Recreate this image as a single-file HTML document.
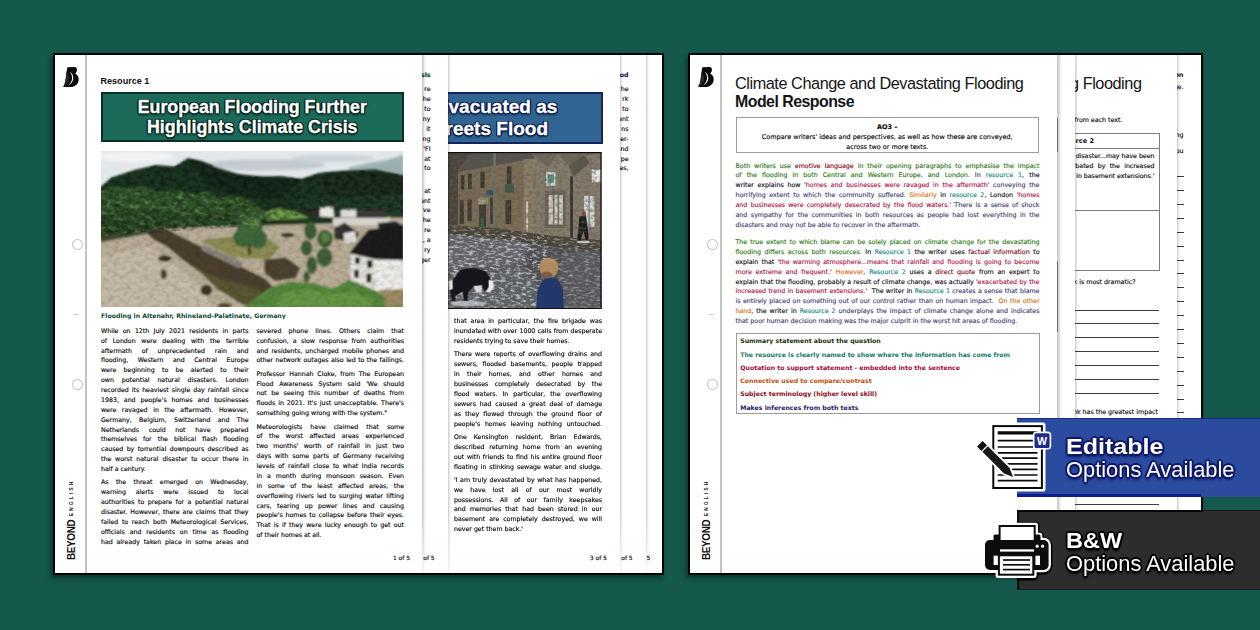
<!DOCTYPE html>
<html lang="en">
<head>
<meta charset="utf-8">
<title>Climate Change and Devastating Flooding</title>
<style>
html,body{margin:0;padding:0}
body{width:1260px;height:630px;overflow:hidden;background:#15594c;position:relative;font-family:"Liberation Sans",sans-serif;color:#111}
.abs{position:absolute}
.z2{z-index:2}
.grp{z-index:1;position:absolute;top:53px;height:518px;border:2px solid #040404;background:#fff;box-shadow:-2px 3px 5px rgba(0,0,0,.42)}
.pg{position:absolute;top:0;height:518px;background:#fff;overflow:hidden}
.edge{position:absolute;top:0;bottom:0;width:4.6px;z-index:5;background:linear-gradient(to right,rgba(0,0,0,.2),rgba(0,0,0,.17) 35%,rgba(0,0,0,.05) 70%,rgba(0,0,0,0));-webkit-mask-image:linear-gradient(to bottom,#000 0,#000 88%,rgba(0,0,0,.25) 100%);mask-image:linear-gradient(to bottom,#000 0,#000 88%,rgba(0,0,0,.25) 100%)}
.edge.s{width:3px;background:linear-gradient(to right,rgba(0,0,0,.2),rgba(0,0,0,.1) 45%,rgba(0,0,0,0))}
.mline{position:absolute;top:0;bottom:0;left:30.4px;width:1.3px;background:#c2c2c2}
.hole{position:absolute;left:17px;width:9px;height:9px;border:1px solid #bdbdbd;border-radius:50%;background:#fff}
.tick{position:absolute;left:18px;width:6px;height:1px;background:#d2d2d2}
.logo{position:absolute;left:5px;top:10px;width:22px;height:24px}
.logo b{position:absolute;left:2px;top:-1px;font-weight:bold;font-style:italic;font-size:25px;line-height:25px;color:#111}
.beyond{position:absolute;left:11px;top:505.2px;transform-origin:0 0;transform:rotate(-90deg);white-space:nowrap;font-weight:bold;font-size:10px;line-height:12px;letter-spacing:-.4px;color:#111}
.beyond small{font-size:4.6px;letter-spacing:2.3px;margin-left:3.6px;position:relative;top:-2.2px}
.t{position:absolute;white-space:nowrap}
.body{position:absolute;font-family:"DejaVu Sans","Liberation Sans",sans-serif;font-size:6.25px;line-height:9.87px;color:#0c0c0c;-webkit-text-stroke:.16px currentColor}
.body p{margin:0 0 3.45px 0}
.body .l{display:block;text-align:justify;text-align-last:justify;white-space:nowrap}
.body .e{display:block;white-space:pre;text-align:left}
.body .l span,.body .e span{white-space:pre-wrap}
.pn{position:absolute;font-family:"DejaVu Sans","Liberation Sans",sans-serif;font-size:5.9px;line-height:8px;color:#0c0c0c;-webkit-text-stroke:.15px currentColor;white-space:nowrap;margin-top:.7px}
.ttl{position:absolute;box-sizing:border-box;border:2px solid #0b2f26;color:#fff;font-weight:bold;font-size:17.8px;line-height:20.4px;text-align:center;white-space:nowrap;-webkit-text-stroke:.3px #fff;text-shadow:1.4px 0 .6px #02231b,-1.4px 0 .6px #02231b,0 1.4px .6px #02231b,0 -1.4px .6px #02231b,1px 1px .6px #02231b,-1px 1px .6px #02231b,1px -1px .6px #02231b,-1px -1px .6px #02231b,0 2px 2px #02231b}
.frag{position:absolute;font-family:"DejaVu Sans","Liberation Sans",sans-serif;font-size:6.25px;line-height:9.87px;text-align:right;white-space:nowrap;color:#0c0c0c;-webkit-text-stroke:.16px currentColor}
.frag b{display:block}
.frag span{display:block}
.cg{color:#2f7d16}.cr{color:#8c0a1c}.ct{color:#1b8a86}.cc{color:#b0204f}.cn{color:#2b2a6a}.co{color:#d9731a}.ck{color:#14141c}.cv{color:#4a4676}
.key{position:absolute;font-family:"DejaVu Sans","Liberation Sans",sans-serif;font-weight:bold;font-size:6.22px;line-height:13.27px;white-space:nowrap}
.hr{position:absolute;height:1px;background:#3c3c3c}
.bt{z-index:3;position:absolute;white-space:nowrap;color:#fff;transform-origin:0 50%}
.dj{font-family:"DejaVu Sans","Liberation Sans",sans-serif}

</style>
</head>
<body>

<!-- ================= LEFT GROUP ================= -->
<div class="grp" id="gL" style="left:53px;width:607px">
  <!-- page 5 (sliver) -->
  <div class="pg" id="p5" style="left:0;width:607px">
    <div class="edge s" style="left:590.5px"></div>
    <div class="pn" style="left:591.5px;top:498px">5</div>
  </div>

  <!-- page 4 (sliver) -->
  <div class="pg" id="p4" style="left:0;width:590.5px">
    <div class="edge s" style="left:564.5px"></div>
    <div class="frag" style="right:17px;top:14.6px;width:40px">
      <b style="color:#14245e;margin-bottom:5px">od</b>
      <span>he</span><span>rk</span><span>to</span><span>ent</span><span>ns</span><span>er-</span><span>nd</span><span>pe</span><span>es,</span>
    </div>
    <div class="pn" style="left:566.3px;top:498px">of 5</div>
  </div>

  <!-- page 3 -->
  <div class="pg" id="p3" style="left:0;width:564.5px">
    <div class="abs" style="left:392px;top:0;width:172.5px;height:517px;overflow:hidden">
      <div class="ttl" style="left:-148px;top:37px;width:303.5px;height:51.5px;background:#2f6590;border-color:#15245e;font-size:19px;line-height:22px;text-shadow:1.4px 0 .6px #0c1a4a,-1.4px 0 .6px #0c1a4a,0 1.4px .6px #0c1a4a,0 -1.4px .6px #0c1a4a,1px 1px .6px #0c1a4a,-1px 1px .6px #0c1a4a,1px -1px .6px #0c1a4a,-1px -1px .6px #0c1a4a,0 2px 2px #0c1a4a"><span class="abs" style="right:43.2px;top:1.8px">Residents Evacuated as</span><span class="abs" style="right:52.5px;top:24px">Kensington Streets Flood</span></div>
    <svg class="abs" style="left:0;top:97.2px" width="154.6" height="157.3" viewBox="18 18 587 594" preserveAspectRatio="none">
      <defs>
        <filter id="b3" x="-5%" y="-5%" width="110%" height="110%"><feGaussianBlur stdDeviation="3"/></filter>
        <filter id="nz2" x="0" y="0" width="100%" height="100%"><feTurbulence type="fractalNoise" baseFrequency=".05 .11" numOctaves="3" seed="3"/><feColorMatrix values="0 0 0 0 .8  0 0 0 0 .82  0 0 0 0 .85  2.4 0 0 0 -1.12"/></filter>
        <filter id="nz3" x="0" y="0" width="100%" height="100%"><feTurbulence type="fractalNoise" baseFrequency=".07 .09" numOctaves="3" seed="11"/><feColorMatrix values="0 0 0 0 .12  0 0 0 0 .1  0 0 0 0 .08  2.6 0 0 0 -1.0"/></filter>
        <clipPath id="cb"><path d="M18 18 L605 18 L605 352 L420 335 L200 305 L18 296Z"/></clipPath>
        <clipPath id="c2"><rect x="18" y="18" width="587" height="594"/></clipPath>
        <clipPath id="cw"><path d="M18 296 L200 305 L420 335 L605 352 L605 612 L18 612Z"/></clipPath>
      </defs>
      <g clip-path="url(#c2)">
      <rect x="18" y="18" width="587" height="594" fill="#74695a"/>
      <g filter="url(#b3)">
        <!-- left dark wall -->
        <path d="M18 18 L110 18 L60 92 L60 296 L18 292Z" fill="#4a453e"/>
        <!-- roof -->
        <path d="M110 18 L330 18 L352 42 L60 94Z" fill="#55534f"/>
        <!-- mid facade -->
        <path d="M60 94 L310 50 L310 318 L60 296Z" fill="#7d6e57"/>
        <path d="M60 160 L310 150 L310 200 L60 205Z" fill="#75684f" opacity=".6"/>
        <!-- column -->
        <rect x="308" y="45" width="44" height="280" fill="#8c7f6a"/>
        <!-- right building -->
        <path d="M352 30 L400 70 L440 24 L480 70 L540 30 L605 22 L605 352 L352 328Z" fill="#857b6c"/>
        <path d="M352 18 L605 18 L605 24 L540 32 L480 72 L440 26 L400 72 L352 32Z" fill="#6e675c"/>
        <path d="M480 70 L540 30 L560 60 L500 110Z" fill="#5a554c"/>
        <!-- sky/sign top right -->
        <rect x="568" y="84" width="40" height="48" fill="#e6e8ea"/>
        <rect x="394" y="94" width="36" height="52" fill="#c9d8d2"/>
        <rect x="400" y="104" width="24" height="30" fill="#5a8f86"/>
        <!-- windows mid facade -->
        <g fill="#3a382f">
          <rect x="70" y="105" width="14" height="55"/><rect x="98" y="100" width="14" height="58"/><rect x="145" y="92" width="16" height="62"/>
          <rect x="245" y="72" width="18" height="68"/>
          <rect x="66" y="200" width="16" height="90"/><rect x="96" y="198" width="16" height="80"/>
          <rect x="140" y="215" width="26" height="85"/><rect x="240" y="200" width="22" height="90"/>
          <rect x="182" y="190" width="10" height="100"/>
        </g>
        <rect x="136" y="190" width="36" height="26" fill="#a29a80"/>
        <rect x="238" y="140" width="34" height="32" fill="#3d5a48"/>
        <rect x="168" y="162" width="28" height="20" fill="#3a4f66"/>
        <rect x="145" y="268" width="14" height="40" fill="#2f5a4a"/>
        <!-- pole -->
        <rect x="194" y="18" width="10" height="292" fill="#6f7466"/>
        <!-- right building windows -->
        <rect x="390" y="165" width="78" height="140" fill="#6c6558"/>
        <rect x="404" y="180" width="54" height="112" fill="#cfcfc6"/>
        <rect x="420" y="180" width="6" height="112" fill="#77705f"/><rect x="438" y="180" width="6" height="112" fill="#77705f"/>
        <rect x="538" y="184" width="40" height="118" fill="#d2d6d4"/>
        <rect x="555" y="184" width="5" height="118" fill="#7c8a88"/>
        <rect x="486" y="110" width="10" height="235" fill="#2e2c2a"/>
        <rect x="318" y="205" width="8" height="120" fill="#c8c4b8"/>
        <!-- water -->
        <path d="M18 296 L200 305 L420 335 L605 352 L605 612 L18 612Z" fill="#4f5052"/>
        <path d="M18 296 L200 305 L420 335 L605 352 L605 392 L400 372 L200 345 L18 330Z" fill="#4a4437"/>
        <path d="M18 330 L200 345 L330 362 L300 440 L18 470Z" fill="#626467"/>
        <path d="M18 470 L300 440 L360 520 L360 612 L18 612Z" fill="#5c5e62"/>
        <path d="M450 400 L605 392 L605 612 L460 612Z" fill="#58595b"/>
        <!-- man -->
        <path d="M520 262 L545 256 L552 300 L556 350 L544 352 L536 316 L524 354 L512 350 L518 300Z" fill="#1c1c1c"/>
        <circle cx="538" cy="250" r="8" fill="#9a3a2a"/>
        <ellipse cx="535" cy="358" rx="26" ry="5" fill="#b8bcc0"/>
      </g>
      <g clip-path="url(#cb)"><rect x="18" y="18" width="587" height="340" filter="url(#nz3)" opacity=".55"/></g>
      <g clip-path="url(#cw)"><rect x="18" y="296" width="587" height="316" filter="url(#nz2)" opacity=".5"/><rect x="18" y="330" width="380" height="282" filter="url(#nz2)" opacity=".55"/></g>
      <g filter="url(#b3)">
        <!-- dog -->
        <path d="M40 500 L70 462 L120 455 L165 468 L185 500 L180 530 L160 545 L150 520 L120 525 L100 545 L95 580 L82 580 L78 545 L50 560 L48 582 L36 580 L30 540Z" fill="#15151a"/>
        <path d="M176 500 L192 505 L196 530 L180 548 L166 546 L176 528Z" fill="#ecebea"/>
        <path d="M24 505 L38 500 L40 535 L26 540Z" fill="#e4e3e2"/>
        <path d="M118 524 L150 522 L150 545 L130 550Z" fill="#d8d7d5"/>
        <ellipse cx="100" cy="590" rx="70" ry="10" fill="#c9ccd0" opacity=".7"/>
        <!-- boy -->
        <path d="M356 612 L362 540 L380 502 L410 492 L440 500 L458 540 L462 612Z" fill="#24376a"/>
        <ellipse cx="405" cy="455" rx="36" ry="38" fill="#b08a5e"/>
        <path d="M372 440 C380 412 430 410 441 445 C425 432 395 430 372 440Z" fill="#b8905f"/>
        <ellipse cx="396" cy="482" rx="22" ry="12" fill="#7d5f45"/>
      </g>
      <rect x="18" y="18" width="587" height="594" fill="none" stroke="#0b0b0b" stroke-width="9"/>
      </g>
    </svg>

<div class="body" style="left:7px;top:261.4px;width:148px;"><p><span class="l">that area in particular, the fire brigade was</span><span class="l">inundated with over 1000 calls from desperate</span><span class="e">residents trying to save their homes.</span></p><p><span class="l">There were reports of overflowing drains and</span><span class="l">sewers, flooded basements, people trapped</span><span class="l">in their homes, and other homes and</span><span class="l">businesses completely desecrated by the</span><span class="l">flood waters. In particular, the overflowing</span><span class="l">sewers had caused a great deal of damage</span><span class="l">as they flowed through the ground floor of</span><span class="l">people's homes leaving nothing untouched.</span></p><p><span class="l">One Kensington resident, Brian Edwards,</span><span class="l">described returning home from an evening</span><span class="l">out with friends to find his entire ground floor</span><span class="l">floating in stinking sewage water and sludge.</span></p><p><span class="l">'I am truly devastated by what has happened,</span><span class="l">we have lost all of our most worldly</span><span class="l">possessions. All of our family keepsakes</span><span class="l">and memories that had been stored in our</span><span class="l">basement are completely destroyed, we will</span><span class="e">never get them back.'</span></p></div>
      <div class="pn" style="left:143px;top:498px">3 of 5</div>
    </div>
    <div class="edge s" style="left:392.5px"></div>
  </div>

  <!-- page 2 (sliver) -->
  <div class="pg" id="p2" style="left:0;width:392.5px">
    <div class="edge" style="left:366.5px"></div>
    <div class="frag" style="right:17px;top:14.6px;width:40px">
      <b style="color:#0b4a33;margin-bottom:5px">sis</b>
      <span>re</span><span>he</span><span>to</span><span>ny</span><span>it</span><span>ng</span><span>'FI</span><span>at</span><span>to</span>
      <span style="margin-top:12.4px">at</span><span>ent</span><span>ve</span><span>he</span><span>re</span><span>, a</span><span>ry</span><span>ger</span>
    </div>
    <div class="pn" style="left:368.3px;top:498px">of 5</div>
  </div>

  <!-- page 1 -->
  <div class="pg" id="p1" style="left:0;width:366.5px">
  <div class="mline"></div>
  <svg class="abs" style="left:0;top:3px" width="40" height="40" viewBox="0 0 630 630"><path d="M195 145 L318 142 C345 150 352 185 341 212 C335 226 326 238 318 246 C357 266 381 310 372 356 C362 410 320 450 270 456 L128 458 L152 400 C166 350 172 280 181 215 Z" fill="#0a0a0a"/><path d="M232 222 C264 232 294 280 287 330 C280 380 246 416 204 433 C250 396 271 350 269 310 C267 270 252 240 232 222 Z" fill="#fff"/><path d="M182 230 C215 260 232 310 215 365 C200 400 175 430 150 445 L160 400 C172 350 176 290 182 230Z" fill="#2a2a2a"/></svg>
  <div class="hole" style="top:183.5px"></div>
  <div class="tick" style="top:258.5px"></div>
  <div class="hole" style="top:323.5px"></div>
  <div class="beyond">BEYOND<small>ENGLISH</small></div>

    <div class="t" style="left:45.4px;top:21px;font-weight:bold;font-size:9.1px;line-height:10px;color:#111">Resource 1</div>
    <div class="ttl" style="left:46px;top:36.8px;width:302.5px;height:50px;background:#1b6a5a;padding-top:2.9px">European Flooding Further<br>Highlights Climate Crisis</div>
    <svg class="abs" style="left:46.3px;top:95.5px" width="302.2" height="156.8" viewBox="20 17 1147 595" preserveAspectRatio="none">
      <defs>
        <filter id="b1" x="-5%" y="-5%" width="110%" height="110%"><feGaussianBlur stdDeviation="3.2"/></filter>
        <filter id="b2" x="-5%" y="-5%" width="110%" height="110%"><feGaussianBlur stdDeviation="7"/></filter>
        <filter id="nz" x="0" y="0" width="100%" height="100%"><feTurbulence type="fractalNoise" baseFrequency=".045 .06" numOctaves="3" seed="7"/><feColorMatrix values="0 0 0 0 0  0 0 0 0 0  0 0 0 0 0  1.5 0 0 0 -0.55"/></filter>
        <filter id="nzl" x="0" y="0" width="100%" height="100%"><feTurbulence type="fractalNoise" baseFrequency=".035 .05" numOctaves="2" seed="21"/><feColorMatrix values="0 0 0 0 .33  0 0 0 0 .48  0 0 0 0 .24  2.2 0 0 0 -1.1"/></filter>
        <clipPath id="cf"><path d="M10 165 L80 150 L130 160 L180 150 L240 175 L300 165 L360 180 L420 172 L470 195 L540 185 L600 215 L640 240 L620 300 L10 340Z"/></clipPath>
        <clipPath id="cl1"><path d="M10 160 L60 118 L150 88 L230 70 L300 76 L350 44 L400 54 L440 70 L480 100 L560 106 L640 116 L700 112 L780 122 L850 100 L930 92 L1000 90 L1060 86 L1110 98 L1180 112 L1180 250 L840 240 L640 300 L10 340Z"/></clipPath>
        <clipPath id="c1"><rect x="20" y="17" width="1147" height="595"/></clipPath>
      </defs>
      <g clip-path="url(#c1)">
      <rect x="20" y="17" width="1147" height="595" fill="#e3e7ea"/>
      <g filter="url(#b2)">
        <ellipse cx="640" cy="70" rx="230" ry="22" fill="#c3cbd1"/>
        <ellipse cx="900" cy="45" rx="160" ry="14" fill="#cdd4d9"/>
        <ellipse cx="150" cy="40" rx="150" ry="20" fill="#f0f2f3"/>
        <path d="M960 80 L1040 62 L1110 50 L1170 30 L1170 120 L960 110Z" fill="#9db0b1"/>
      </g>
      <g filter="url(#b1)">
        <!-- mountains -->
        <path d="M10 160 L60 118 L150 88 L230 70 L300 76 L350 44 L400 54 L440 70 L480 100 L560 106 L640 116 L700 112 L780 122 L850 100 L930 92 L1000 90 L1060 86 L1110 98 L1180 112 L1180 340 L10 340Z" fill="#1d3522"/>
        <path d="M350 48 L440 74 L560 110 L700 116 L780 126 L700 200 L520 180 L420 140Z" fill="#16291b"/>
        <path d="M850 104 L1000 92 L1110 100 L1180 116 L1180 230 L900 220Z" fill="#1a2f1f"/>
        <!-- forest -->
        <path d="M10 165 L80 150 L130 160 L180 150 L240 175 L300 165 L360 180 L420 172 L470 195 L540 185 L600 215 L640 240 L620 300 L10 340Z" fill="#33572b"/>
        <path d="M10 260 L200 240 L420 262 L600 255 L630 290 L300 312 L10 340Z" fill="#2a4a25"/>
        <!-- field -->
        <path d="M640 248 L690 234 L760 246 L810 272 L650 282Z" fill="#6d9a48"/>
        <path d="M600 282 L820 272 L830 292 L560 302Z" fill="#22361f"/>
        <!-- right hill low -->
        <path d="M760 200 L1180 180 L1180 300 L820 270Z" fill="#213a25"/>
        <!-- river -->
        <path d="M10 345 L200 318 L420 305 L640 300 L900 292 L1130 270 L1180 270 L1180 620 L10 620Z" fill="#b9ad97"/>
        <path d="M10 330 L190 315 L200 330 L20 362Z" fill="#3a4a2c"/>
        <path d="M900 270 L1120 268 L1100 300 L900 300Z" fill="#d5d2ca"/>
        <!-- village -->
        <path d="M850 232 L900 228 L905 268 L850 266Z" fill="#e8e6e0"/>
        <path d="M930 240 L990 238 L990 268 L930 268Z" fill="#dcdad4"/>
        <path d="M780 236 L850 236 L850 262 L780 260Z" fill="#2c2a28"/>
        <path d="M990 238 L1100 236 L1105 270 L990 270Z" fill="#3a3838"/>
        <!-- island -->
        <path d="M395 356 L520 340 L660 352 L700 380 L660 430 L520 420Z" fill="#8d8c52"/>
        <!-- debris dam -->
        <path d="M185 322 L255 305 L330 345 L430 395 L540 450 L640 500 L680 540 L670 600 L600 612 L540 590 L470 540 L400 480 L330 430 L270 380 L215 350Z" fill="#4b3f2e"/>
        <path d="M640 430 L720 420 L775 460 L760 500 L680 510 L640 480Z" fill="#4d4231"/>
        <path d="M20 420 L200 380 L330 470 L420 560 L440 620 L20 620Z" fill="#c4baa7"/>
        <path d="M410 372 L560 440 L545 462 L400 392Z" fill="#8d877a"/>
        <path d="M380 460 L470 500 L620 540 L640 600 L560 600 L460 540Z" fill="#5a5432"/>
        <!-- tree 1 -->
        <g fill="#40663a"><ellipse cx="585" cy="300" rx="50" ry="42"/><ellipse cx="560" cy="345" rx="38" ry="36"/><ellipse cx="615" cy="350" rx="36" ry="38"/><ellipse cx="610" cy="268" rx="30" ry="20"/><rect x="578" y="370" width="10" height="40" fill="#3a3324"/></g><ellipse cx="600" cy="290" rx="26" ry="20" fill="#55803f"/>
        <!-- tree 2 -->
        <g fill="#3f5f34"><ellipse cx="815" cy="320" rx="24" ry="34"/><ellipse cx="870" cy="350" rx="30" ry="34"/><ellipse cx="800" cy="385" rx="22" ry="30"/><ellipse cx="868" cy="420" rx="30" ry="36"/><ellipse cx="820" cy="450" rx="20" ry="34"/><ellipse cx="800" cy="495" rx="12" ry="22"/></g><ellipse cx="872" cy="345" rx="16" ry="20" fill="#5a8444"/>
        <!-- back houses -->
        <path d="M905 310 L945 288 L1000 330 L985 365 L905 350Z" fill="#34322f"/>
        <path d="M940 330 L985 322 L990 362 L945 366Z" fill="#e9e7e2"/>
        <path d="M1070 290 L1140 284 L1165 300 L1165 320 L1075 316Z" fill="#24242a"/>
        <!-- house -->
        <path d="M968 408 L1170 425 L1170 542 L1060 548 L968 512Z" fill="#eeece8"/>
        <path d="M968 408 L1062 424 L1060 548 L968 512Z" fill="#e4e2dc"/>
        <path d="M962 404 L1035 316 L1120 305 L1170 296 L1170 432 L1060 428Z" fill="#1b1b1f"/>
        <rect x="984" y="420" width="18" height="26" fill="#222"/><rect x="1030" y="432" width="20" height="28" fill="#222"/>
        <rect x="982" y="468" width="16" height="30" fill="#222"/><rect x="1028" y="482" width="18" height="34" fill="#222"/>
        <!-- water bottom right -->
        <path d="M1075 545 L1170 540 L1170 620 L1085 620Z" fill="#9d8a63"/>
        <!-- bushes -->
        <path d="M555 620 L600 580 L660 535 L740 512 L830 520 L900 540 L960 505 L1010 525 L1060 545 L1095 570 L1100 620Z" fill="#55873a"/>
        <path d="M700 560 L800 540 L900 560 L980 550 L1050 580 L1060 620 L680 620Z" fill="#669645"/>
        <!-- small debris -->
        <ellipse cx="262" cy="425" rx="26" ry="12" fill="#3c3426"/>
        <ellipse cx="258" cy="485" rx="12" ry="18" fill="#4a4030"/>
        <ellipse cx="728" cy="336" rx="26" ry="9" fill="#3a3428"/>
        <ellipse cx="420" cy="545" rx="22" ry="20" fill="#3e3628"/>
        <ellipse cx="490" cy="604" rx="28" ry="9" fill="#4a4030"/>
      </g>
      <g clip-path="url(#cf)"><rect x="20" y="140" width="640" height="200" filter="url(#nzl)" opacity=".6"/></g>
      <g clip-path="url(#cl1)"><rect x="20" y="17" width="1147" height="595" filter="url(#nz)" opacity=".6"/></g>
      <rect x="20" y="300" width="1147" height="312" filter="url(#nz)" opacity=".18"/>
      </g>
    </svg>

    <div class="t dj" style="left:46px;top:256.4px;font-weight:bold;font-size:6.22px;line-height:9px;color:#0b4a33">Flooding in Altenahr, Rhineland-Palatinate, Germany</div>
<div class="body" style="left:46px;top:270.8px;width:147.5px;"><p><span class="l">While on 12th July 2021 residents in parts</span><span class="l">of London were dealing with the terrible</span><span class="l">aftermath of unprecedented rain and</span><span class="l">flooding, Western and Central Europe</span><span class="l">were beginning to be alerted to their</span><span class="l">own potential natural disasters. London</span><span class="l">recorded its heaviest single day rainfall since</span><span class="l">1983, and people's homes and businesses</span><span class="l">were ravaged in the aftermath. However,</span><span class="l">Germany, Belgium, Switzerland and The</span><span class="l">Netherlands could not have prepared</span><span class="l">themselves for the biblical flash flooding</span><span class="l">caused by torrential downpours described as</span><span class="l">the worst natural disaster to occur there in</span><span class="e">half a century.</span></p><p><span class="l">As the threat emerged on Wednesday,</span><span class="l">warning alerts were issued to local</span><span class="l">authorities to prepare for a potential natural</span><span class="l">disaster. However, there are claims that they</span><span class="l">failed to reach both Meteorological Services,</span><span class="l">officials and residents on time as flooding</span><span class="l">had already taken place in some areas and</span></p></div>
<div class="body" style="left:201.5px;top:270.8px;width:147.5px;"><p><span class="l">severed phone lines. Others claim that</span><span class="l">confusion, a slow response from authorities</span><span class="l">and residents, uncharged mobile phones and</span><span class="l">other network outages also led to the failings.</span></p><p><span class="l">Professor Hannah Cloke, from The European</span><span class="l">Flood Awareness System said 'We should</span><span class="l">not be seeing this number of deaths from</span><span class="l">floods in 2021. It's just unacceptable. There's</span><span class="e">something going wrong with the system."</span></p><p><span class="l">Meteorologists have claimed that some</span><span class="l">of the worst affected areas experienced</span><span class="l">two months' worth of rainfall in just two</span><span class="l">days with some parts of Germany receiving</span><span class="l">levels of rainfall close to what India records</span><span class="l">in a month during monsoon season. Even</span><span class="l">in some of the least affected areas, the</span><span class="l">overflowing rivers led to surging water lifting</span><span class="l">cars, tearing up power lines and causing</span><span class="l">people's homes to collapse before their eyes.</span><span class="l">That is if they were lucky enough to get out</span><span class="e">of their homes at all.</span></p></div>
    <div class="pn" style="left:338px;top:498px">1 of 5</div>
  </div>

</div>

<!-- ================= RIGHT GROUP ================= -->
<div class="grp" id="gR" style="left:688px;width:511px">
  <!-- right page 4 (sliver) -->
  <div class="pg" id="r4" style="left:0;width:511px">
    <div class="edge s" style="left:486.5px"></div>
    <div class="abs" style="left:486.5px;top:0;width:24.5px;height:517px;overflow:hidden">
      <div class="t" style="right:17.5px;top:14.6px;font-family:'DejaVu Sans','Liberation Sans',sans-serif;font-size:6.5px;line-height:10px;font-weight:bold;color:#151515">Comprehension</div>
      <div class="t" style="right:17.5px;top:27px;font-family:'DejaVu Sans','Liberation Sans',sans-serif;font-size:6.3px;line-height:10px;color:#0c0c0c;-webkit-text-stroke:.15px currentColor">the passage.</div>
      <div class="t" style="right:17.5px;top:74.6px;font-family:'DejaVu Sans','Liberation Sans',sans-serif;font-size:6.3px;line-height:10px;color:#0c0c0c;-webkit-text-stroke:.15px currentColor">following</div>
      <div class="t" style="right:17.5px;top:91px;font-family:'DejaVu Sans','Liberation Sans',sans-serif;font-size:6.3px;line-height:10px;color:#0c0c0c;-webkit-text-stroke:.15px currentColor">do you</div>
      <div class="hr" style="left:0;top:121.1px;width:7px"></div>
      <div class="hr" style="left:0;top:135.0px;width:7px"></div>
      <div class="hr" style="left:0;top:148.9px;width:7px"></div>
      <div class="hr" style="left:0;top:162.8px;width:7px"></div>
      <div class="hr" style="left:0;top:176.7px;width:7px"></div>
      <div class="hr" style="left:0;top:190.6px;width:7px"></div>
      <div class="hr" style="left:0;top:204.5px;width:7px"></div>
      <div class="hr" style="left:0;top:218.4px;width:7px"></div>
      <div class="hr" style="left:0;top:232.3px;width:7px"></div>
      <div class="hr" style="left:0;top:246.2px;width:7px"></div>
      <div class="hr" style="left:0;top:260.1px;width:7px"></div>
      <div class="hr" style="left:0;top:274.0px;width:7px"></div>
      <div class="hr" style="left:0;top:287.9px;width:7px"></div>
      <div class="hr" style="left:0;top:301.8px;width:7px"></div>
      <div class="hr" style="left:0;top:315.7px;width:7px"></div>
      <div class="hr" style="left:0;top:329.6px;width:7px"></div>
      <div class="hr" style="left:0;top:343.5px;width:7px"></div>
      <div class="hr" style="left:0;top:357.4px;width:7px"></div>
      <div class="hr" style="left:0;top:371.3px;width:7px"></div>
      <div class="hr" style="left:0;top:385.2px;width:7px"></div>
      <div class="hr" style="left:0;top:399.1px;width:7px"></div>
      <div class="hr" style="left:0;top:413.0px;width:7px"></div>
      <div class="hr" style="left:0;top:426.9px;width:7px"></div>
      <div class="hr" style="left:0;top:440.8px;width:7px"></div>
      <div class="hr" style="left:0;top:454.7px;width:7px"></div>
      <div class="hr" style="left:0;top:468.6px;width:7px"></div>
      <div class="hr" style="left:0;top:482.5px;width:7px"></div>
      <div class="hr" style="left:0;top:496.4px;width:7px"></div>
    </div>
  </div>

  <!-- right page 3 -->
  <div class="pg" id="r3" style="left:0;width:486.5px">
    <div class="abs" style="left:384px;top:0;width:102.5px;height:517px;overflow:hidden">
      <div class="t" style="right:35px;top:18.5px;font-size:16.3px;line-height:19px;letter-spacing:-.45px;color:#151515">Climate Change and Devastating Flooding</div>
      <div class="t" style="right:54px;top:60.3px;font-family:'DejaVu Sans','Liberation Sans',sans-serif;font-size:6.3px;line-height:9px;color:#0c0c0c;-webkit-text-stroke:.15px currentColor">Find a quotation from each text.</div>
      <div class="abs" style="left:-60px;top:77.5px;width:145.5px;height:138px;border:1px solid #7d7d7d;box-sizing:border-box"></div>
      <div class="hr" style="left:0;top:92.5px;width:85px;background:#7d7d7d"></div>
      <div class="hr" style="left:0;top:154.5px;width:85px;background:#7d7d7d"></div>
      <div class="t" style="right:82.5px;top:80.6px;font-family:'DejaVu Sans','Liberation Sans',sans-serif;font-size:6.6px;line-height:10px;font-weight:bold;color:#151515">Resource 2</div>
      <div class="frag" style="right:22px;top:95.8px;width:140px;line-height:10.1px">
        <span>'...the natural disaster...may have been</span><span style="word-spacing:2.3px">exacerbated by the increased</span><span>trend in basement extensions.'</span>
      </div>
      <div class="t" style="right:41px;top:222.3px;font-family:'DejaVu Sans','Liberation Sans',sans-serif;font-size:6.3px;line-height:9px;color:#0c0c0c;-webkit-text-stroke:.15px currentColor">Which quotation do you think is most dramatic?</div>
      <div class="hr" style="left:0;top:254.5px;width:85px"></div>
      <div class="hr" style="left:0;top:268.4px;width:85px"></div>
      <div class="hr" style="left:0;top:282.3px;width:85px"></div>
      <div class="hr" style="left:0;top:296.2px;width:85px"></div>
      <div class="hr" style="left:0;top:310.1px;width:85px"></div>
      <div class="hr" style="left:0;top:324px;width:85px"></div>
      <div class="hr" style="left:0;top:337.9px;width:85px"></div>
      <div class="t" style="right:18.5px;top:351.8px;font-family:'DejaVu Sans','Liberation Sans',sans-serif;font-size:6.3px;line-height:9px;color:#0c0c0c;-webkit-text-stroke:.15px currentColor">Which quotation do you think has the greatest impact</div>
      <div class="hr" style="left:0;top:393.5px;width:85px"></div>
      <div class="hr" style="left:0;top:407.4px;width:85px"></div>
      <div class="hr" style="left:0;top:421.3px;width:85px"></div>
      <div class="hr" style="left:0;top:435.2px;width:85px"></div>
      <div class="hr" style="left:0;top:449.1px;width:85px"></div>
    </div>
    <div class="edge s" style="left:384.5px"></div>
  </div>

  <!-- right page 2 (blank sliver) -->
  <div class="pg" id="r2" style="left:0;width:384.5px">
    <div class="edge" style="left:367px"></div>
    <div class="abs" style="left:367px;top:63px;width:1.3px;height:33.5px;background:#6e6e6e;z-index:6"></div>
    <div class="abs" style="left:367px;top:205.7px;width:1.3px;height:71.5px;background:#6e6e6e;z-index:6"></div>
  </div>

  <!-- right page 1 -->
  <div class="pg" id="r1" style="left:0;width:367px">
  <div class="mline"></div>
  <svg class="abs" style="left:0;top:3px" width="40" height="40" viewBox="0 0 630 630"><path d="M195 145 L318 142 C345 150 352 185 341 212 C335 226 326 238 318 246 C357 266 381 310 372 356 C362 410 320 450 270 456 L128 458 L152 400 C166 350 172 280 181 215 Z" fill="#0a0a0a"/><path d="M232 222 C264 232 294 280 287 330 C280 380 246 416 204 433 C250 396 271 350 269 310 C267 270 252 240 232 222 Z" fill="#fff"/><path d="M182 230 C215 260 232 310 215 365 C200 400 175 430 150 445 L160 400 C172 350 176 290 182 230Z" fill="#2a2a2a"/></svg>
  <div class="hole" style="top:183.5px"></div>
  <div class="tick" style="top:258.5px"></div>
  <div class="hole" style="top:323.5px"></div>
  <div class="beyond">BEYOND<small>ENGLISH</small></div>

    <div class="t" id="rt1" style="left:45px;top:18.5px;font-size:16.3px;line-height:19px;letter-spacing:-.45px;color:#151515">Climate Change and Devastating Flooding</div>
    <div class="t" id="rt2" style="left:45px;top:36.5px;font-size:15.9px;line-height:19px;font-weight:bold;letter-spacing:-.52px;color:#151515">Model Response</div>
    <div class="abs" style="left:45.5px;top:61.9px;width:303.5px;height:36.3px;border:1px solid #9c9c9c;box-sizing:border-box;text-align:center;font-family:'DejaVu Sans','Liberation Sans',sans-serif;font-size:6.46px;line-height:10px;padding-top:3.8px;color:#0c0c0c;-webkit-text-stroke:.15px currentColor;white-space:nowrap"><b>AO3 –</b><br>Compare writers' ideas and perspectives, as well as how these are conveyed,<br>across two or more texts.</div>
<div class="body" style="left:45.5px;top:105.6px;width:304px;font-size:6.3px"><p><span class="l"><span class="cg">Both writers use </span><span class="cr">emotive language</span><span class="cg"> in their opening paragraphs to emphasise the impact</span></span><span class="l"><span class="cg">of the flooding in both Central and Western Europe, and London.</span><span class="cv"> In </span><span class="ct">resource 1</span><span class="ck">, the</span></span><span class="l"><span class="ck">writer explains how </span><span class="cc">'homes and businesses were ravaged in the aftermath'</span><span class="cv"> conveying the</span></span><span class="l"><span class="cv">horrifying extent to which the community suffered. </span><span class="co">Similarly</span><span class="ck"> in </span><span class="ct">resource 2</span><span class="ck">, London </span><span class="cc">'homes</span></span><span class="l"><span class="cc">and businesses were completely desecrated by the flood waters.'</span><span class="cv"> There is a sense of shock</span></span><span class="l"><span class="cv">and sympathy for the communities in both resources as people had lost everything in the</span></span><span class="e"><span class="cv">disasters and may not be able to recover in the aftermath.</span></span></p></div>
<div class="body" style="left:45.5px;top:182.1px;width:304px;font-size:6.3px"><p><span class="l"><span class="cg">The true extent to which blame can be solely placed on climate change for the devastating</span></span><span class="l"><span class="cg">flooding differs across both resources.</span><span class="ck"> In </span><span class="ct">Resource 1</span><span class="ck"> the writer uses </span><span class="cr">factual information</span><span class="ck"> to</span></span><span class="l"><span class="ck">explain that </span><span class="cc">'the warming atmosphere...means that rainfall and flooding is going to become</span></span><span class="l"><span class="cc">more extreme and frequent.'</span><span class="co"> However</span><span class="ck">, </span><span class="ct">Resource 2</span><span class="ck"> uses a </span><span class="cr">direct quote</span><span class="ck"> from an expert to</span></span><span class="l"><span class="ck">explain that the flooding, probably a result of climate change, was actually </span><span class="cc">'exacerbated by the</span></span><span class="l"><span class="cc">increased trend in basement extensions.'</span><span class="ck">  The writer in </span><span class="ct">Resource 1</span><span class="cv"> creates a sense that blame</span></span><span class="l"><span class="cv">is entirely placed on something out of our control rather than on human impact. </span><span class="co"> On the other</span></span><span class="l"><span class="co">hand</span><span class="ck">, the writer in </span><span class="ct">Resource 2</span><span class="cv"> underplays the impact of climate change alone and indicates</span></span><span class="e"><span class="cv">that poor human decision making was the major culprit in the worst hit areas of flooding.</span></span></p></div>
    <div class="abs" style="left:45.5px;top:277.5px;width:304px;height:81.5px;border:1px solid #9c9c9c;box-sizing:border-box"></div>
    <div class="key" style="left:50.2px;top:279.3px">
      <div style="color:#16330a">Summary statement about the question</div>
      <div style="color:#15796c">The resource is clearly named to show where the information has come from</div>
      <div style="color:#9e0f3c">Quotation to support statement - embedded into the sentence</div>
      <div style="color:#c2500a">Connective used to compare/contrast</div>
      <div style="color:#8a0a18">Subject terminology (higher level skill)</div>
      <div style="color:#2a1a66">Makes inferences from both texts</div>
    </div>
  </div>

</div>

<!-- ================= BADGES ================= -->
<!-- Editable badge -->
<div class="abs z2" id="bE" style="left:1017px;top:417.7px;width:243px;height:79.1px;background:#2b4b9e;border-top:1.3px solid #1a2a82;box-sizing:border-box"></div>
<div class="abs z2" style="left:1017px;top:493.6px;width:184.2px;height:3.2px;background:#0d1c8e"></div>
<svg class="abs z2" style="left:970px;top:415px" width="100" height="85" viewBox="970 415 100 85">
  <!-- halo -->
  <rect x="992.3" y="425.1" width="50.6" height="63.9" fill="#fff" stroke="#fff" stroke-width="5.2" stroke-linejoin="round"/>
  <rect x="993.3" y="426.1" width="48.6" height="61.9" fill="#fff" stroke="#0a0a0a" stroke-width="2"/>
  <g stroke="#0a0a0a" stroke-linecap="butt">
    <line x1="997.7" x2="1037.5" y1="432.9" y2="432.9" stroke-width="3.4"/>
    <line x1="997.7" x2="1037.5" y1="440.6" y2="440.6" stroke-width="1.7"/>
    <line x1="997.7" x2="1037.5" y1="447" y2="447" stroke-width="1.7"/>
    <line x1="997.7" x2="1037.5" y1="452.8" y2="452.8" stroke-width="1.7"/>
    <line x1="1002" x2="1037.5" y1="458.2" y2="458.2" stroke-width="1.7"/>
    <line x1="1007" x2="1037.5" y1="463.9" y2="463.9" stroke-width="1.7"/>
    <line x1="1012" x2="1037.5" y1="469.4" y2="469.4" stroke-width="1.7"/>
    <line x1="997.7" x2="1037.5" y1="475" y2="475" stroke-width="1.7"/>
    <line x1="997.7" x2="1037.5" y1="480.7" y2="480.7" stroke-width="1.7"/>
  </g>
  <!-- pencil -->
  <g transform="translate(982.1,446) rotate(45)">
    <path d="M-3.2 -3.9 H35 L43.8 0 L35 3.9 H-3.2Z" fill="#fff" stroke="#fff" stroke-width="3.6" stroke-linejoin="round"/>
    <rect x="-3.2" y="-3.9" width="6.2" height="7.8" fill="#111"/>
    <path d="M4.3 -3.9 H35 L43.8 0 L35 3.9 H4.3Z" fill="#1a1a1a"/>
  </g>
  <!-- W badge -->
  <rect x="1034.5" y="433.2" width="15.1" height="14.8" rx="2" fill="#1f2c8c" stroke="#fff" stroke-width="3.2"/>
  <rect x="1034.5" y="433.2" width="15.1" height="14.8" rx="1.5" fill="#1f2c8c"/>
  <text x="1042.1" y="444.6" text-anchor="middle" font-family="Liberation Sans, sans-serif" font-weight="bold" font-size="10.6" fill="#fff">W</text>
</svg>
<div class="bt" id="bt1" style="left:1066px;top:431.8px;font-size:22.2px;line-height:30px;font-weight:bold;transform:scaleX(1.13);text-shadow:1.7px 0 .7px #0d1768,-1.7px 0 .7px #0d1768,0 1.7px .7px #0d1768,0 -1.7px .7px #0d1768,1.3px 1.3px .7px #0d1768,-1.3px 1.3px .7px #0d1768,1.3px -1.3px .7px #0d1768,-1.3px -1.3px .7px #0d1768,0 2.5px 2.5px #0c1660">Editable</div>
<div class="bt" id="bt2" style="left:1066px;top:455.3px;font-size:21.6px;line-height:30px;transform:scaleX(1.012);text-shadow:1.7px 0 .7px #0d1768,-1.7px 0 .7px #0d1768,0 1.7px .7px #0d1768,0 -1.7px .7px #0d1768,1.3px 1.3px .7px #0d1768,-1.3px 1.3px .7px #0d1768,1.3px -1.3px .7px #0d1768,-1.3px -1.3px .7px #0d1768,0 2.5px 2.5px #0c1660">Options Available</div>

<!-- B&W badge -->
<div class="abs z2" id="bW" style="left:1017px;top:510px;width:243px;height:79.5px;background:#2d2d2d;border-top:1px solid #1c1418;border-bottom:1.5px solid #241a20;border-left:2px solid #0c0c0c;box-sizing:border-box"></div>
<div class="abs z2" style="left:1017px;top:509.8px;width:185.8px;height:2.5px;background:#050505"></div>
<svg class="abs z2" style="left:970px;top:505px" width="100" height="90" viewBox="970 505 100 90">
  <clipPath id="cbw"><rect x="1017" y="510" width="60" height="79.5"/></clipPath>
  <g clip-path="url(#cbw)"><g fill="#000" stroke="#000" stroke-width="7.6" stroke-linejoin="round" transform="translate(0,.9)">
    <rect x="985" y="540" width="63.6" height="30" rx="5"/>
    <rect x="998.6" y="525" width="37.1" height="16"/>
    <rect x="997.9" y="554.3" width="36.4" height="21.4"/>
    <rect x="994" y="535" width="46" height="8"/>
  </g></g>
  <g fill="#fff" stroke="#fff" stroke-width="4.6" stroke-linejoin="round">
    <rect x="985" y="540" width="63.6" height="30" rx="5"/>
    <rect x="998.6" y="525" width="37.1" height="16"/>
    <rect x="997.9" y="554.3" width="36.4" height="21.4"/>
    <rect x="994" y="535" width="46" height="8"/>
  </g>
  <rect x="985" y="540" width="63.6" height="30" rx="5" fill="#0d0d0d"/>
  <rect x="993.5" y="534.5" width="47" height="8" rx="1.5" fill="#0d0d0d"/>
  <rect x="999.6" y="526" width="35.1" height="15" fill="#fff" stroke="#0d0d0d" stroke-width="2"/>
  <rect x="1000" y="549.3" width="34" height="2.3" fill="#fff"/>
  <rect x="993.6" y="555.7" width="4.6" height="9.3" fill="#fff"/>
  <rect x="1035.4" y="555.7" width="4.6" height="9.3" fill="#fff"/>
  <rect x="998.9" y="555.3" width="34.4" height="19.4" fill="#fff" stroke="#0d0d0d" stroke-width="2"/>
  <g stroke="#0d0d0d" stroke-width="1.7">
    <line x1="1003" x2="1030" y1="560" y2="560"/>
    <line x1="1003" x2="1030" y1="564.8" y2="564.8"/>
    <line x1="1003" x2="1030" y1="569.6" y2="569.6"/>
  </g>
  <circle cx="1037.2" cy="546.2" r="1.6" fill="#fff"/>
  <circle cx="1042.6" cy="546.2" r="1.6" fill="#fff"/>
</svg>
<div class="bt" id="bt3" style="left:1066px;top:525.5px;font-size:22.2px;line-height:30px;font-weight:bold;transform:scaleX(1.06);text-shadow:1.7px 0 .7px #000,-1.7px 0 .7px #000,0 1.7px .7px #000,0 -1.7px .7px #000,1.3px 1.3px .7px #000,-1.3px 1.3px .7px #000,1.3px -1.3px .7px #000,-1.3px -1.3px .7px #000,0 2.5px 2.5px #000">B&amp;W</div>
<div class="bt" id="bt4" style="left:1066px;top:549.2px;font-size:21.6px;line-height:30px;transform:scaleX(1.012);text-shadow:1.7px 0 .7px #000,-1.7px 0 .7px #000,0 1.7px .7px #000,0 -1.7px .7px #000,1.3px 1.3px .7px #000,-1.3px 1.3px .7px #000,1.3px -1.3px .7px #000,-1.3px -1.3px .7px #000,0 2.5px 2.5px #000">Options Available</div>


</body>
</html>
